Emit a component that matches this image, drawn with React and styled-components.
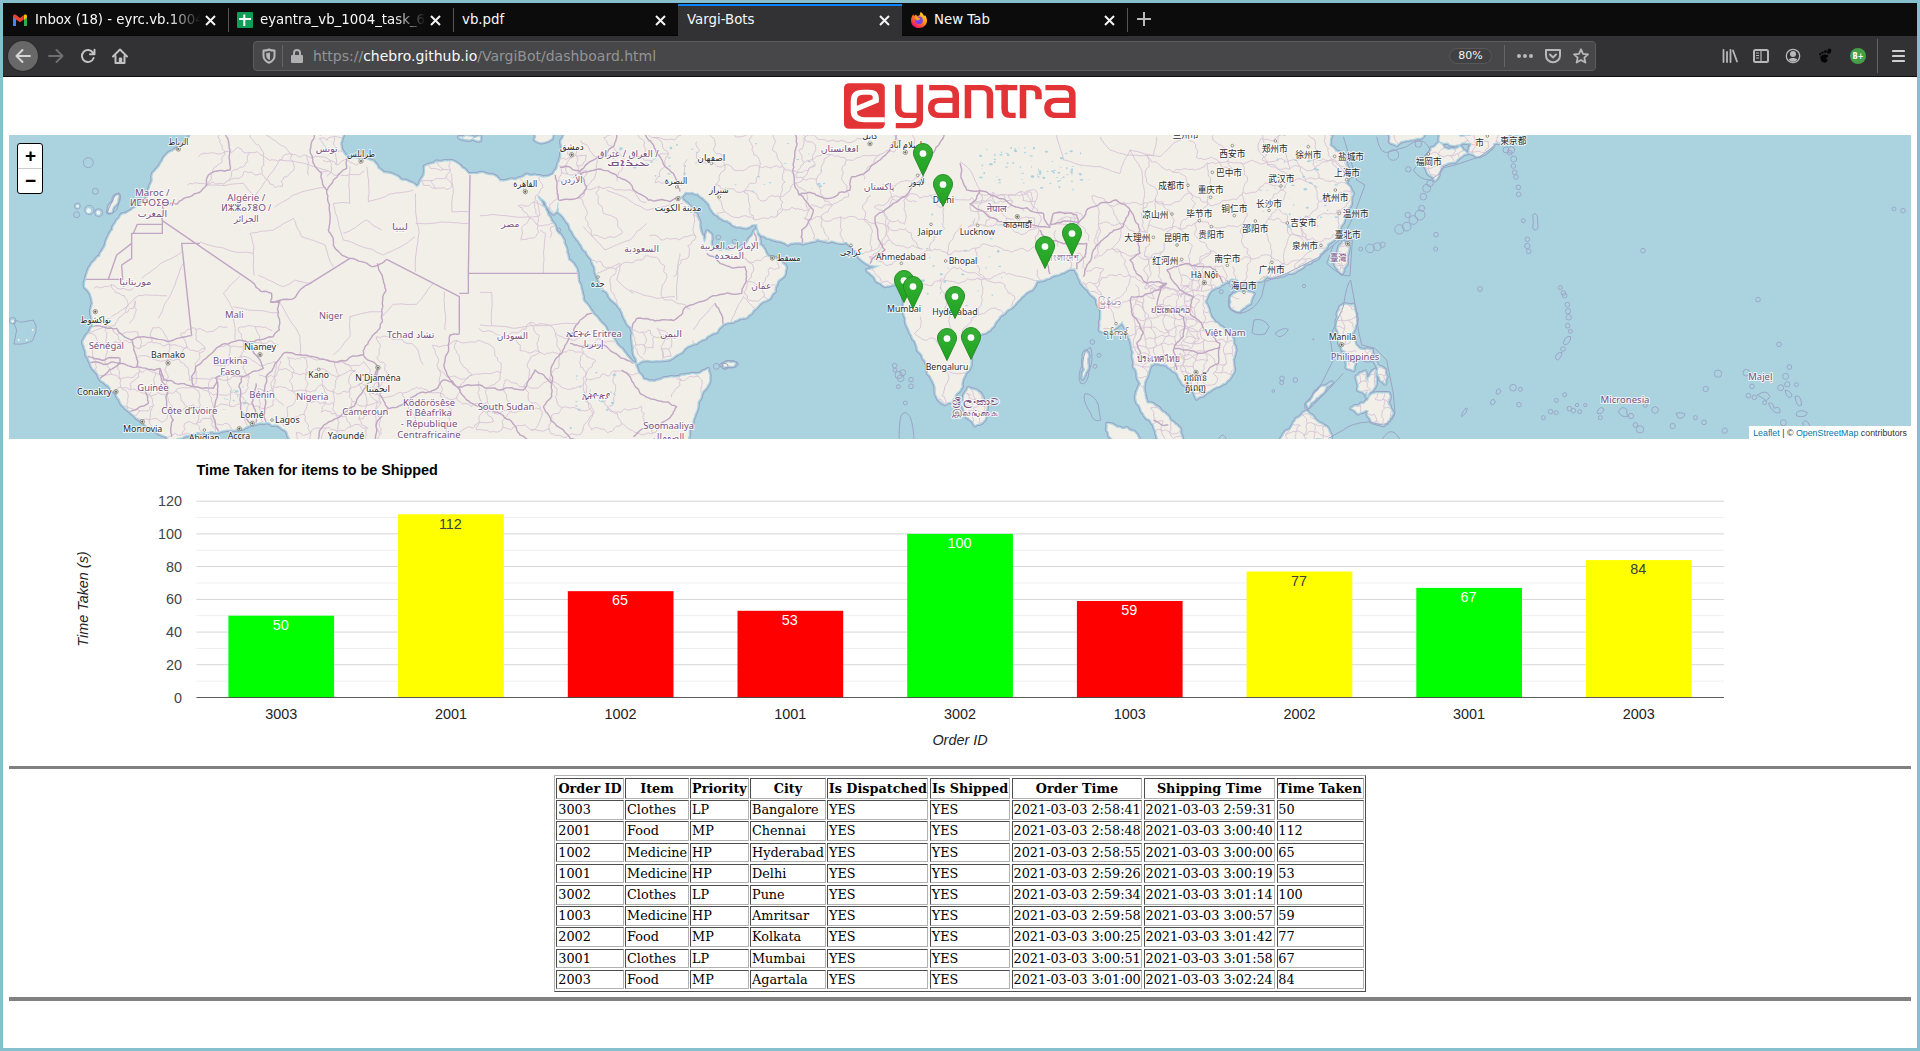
import React from "react";
import styled, { createGlobalStyle } from "styled-components";

const GlobalStyle = createGlobalStyle`
  * { box-sizing: border-box; }
  html, body { margin: 0; padding: 0; background: #86bfcd; overflow: hidden; }
`;

/* ---------- window and browser chrome ---------- */

const Window = styled.div`
  width: 1920px;
  height: 1051px;
  border: 3px solid #86bfcd;
  background: #fff;
  display: flex;
  flex-direction: column;
  overflow: hidden;
`;

const TabBar = styled.div`
  height: 33px;
  flex: none;
  display: flex;
  background: #0c0c0d;
  font: 13.33px "DejaVu Sans", sans-serif;
  color: #f9f9fa;
`;

const Tab = styled.div`
  width: ${(p) => (p.$active ? 224 : 225)}px;
  height: 33px;
  flex: none;
  display: flex;
  align-items: center;
  padding: ${(p) => (p.$active ? "0 12px 0 9px" : "0 12px 0 9px")};
  background: ${(p) => (p.$active ? "#323234" : "transparent")};
  border-top: 1px solid #0c0c0d;
  box-shadow: ${(p) => (p.$active ? "inset 0 2px 0 #0a84ff" : "inset 0 -1px 0 #050505")};
`;

const TabIcon = styled.span`
  width: 16px;
  height: 16px;
  margin-right: 7px;
  flex: none;
  display: flex;
`;

const TabTitle = styled.span`
  flex: 1;
  min-width: 0;
  white-space: nowrap;
  overflow: hidden;
  line-height: 20px;
  margin-top: -1px;
  mask-image: ${(p) => (p.$fade ? "linear-gradient(to left, transparent 0, #000 32px)" : "none")};
`;

const CloseIcon = styled.svg`
  width: 11px;
  height: 11px;
  flex: none;
  margin-left: 4px;
  stroke: #f4f4f5;
  stroke-width: 2;
  fill: none;
`;

const TabDivider = styled.i`
  width: 1px;
  height: 24px;
  margin: 5px -1px 0 0;
  background: #565657;
  flex: none;
`;

const PlusIcon = styled.svg`
  width: 14px;
  height: 14px;
  margin: 9px 0 0 10px;
  stroke: #b9b9ba;
  stroke-width: 2;
`;

const Toolbar = styled.div`
  height: 41px;
  flex: none;
  display: flex;
  align-items: center;
  background: #323234;
  border-bottom: 1px solid #0c0c0d;
  padding: 0 12px 0 4px;
`;

const BackButton = styled.span`
  width: 32px;
  height: 32px;
  border-radius: 50%;
  background: #686869;
  border: 1px solid #29292a;
  display: flex;
  align-items: center;
  justify-content: center;
`;

const Icon = styled.svg`
  width: ${(p) => p.$w || 16}px;
  height: 16px;
  flex: none;
  margin-left: ${(p) => p.$ml || 0}px;
  color: ${(p) => p.$color || "#b8b8b9"};
  fill: none;
  stroke: currentColor;
  stroke-width: 2;
  stroke-linecap: round;
  stroke-linejoin: round;
`;

const UrlBar = styled.div`
  width: 1344px;
  height: 30px;
  margin-left: 125px;
  border: 1px solid #5c5c5e;
  border-radius: 4px;
  background: #474749;
  display: flex;
  align-items: center;
  padding: 0 6px 0 8px;
`;

const BarDivider = styled.i`
  width: 1px;
  height: ${(p) => p.$h}px;
  background: #646468;
  margin-left: ${(p) => p.$ml}px;
`;

const Url = styled.span`
  font: 14px/20px "DejaVu Sans", sans-serif;
  color: #949496;
  margin-left: 10px;
  flex: 1;
  b { font-weight: 400; color: #f9f9fa; }
`;

const ZoomPill = styled.span`
  width: 43px;
  height: 16px;
  border-radius: 8px;
  border: 1px solid #58585a;
  background: #414143;
  color: #f4f4f5;
  font: 11px/14px "DejaVu Sans", sans-serif;
  text-align: center;
`;

const X = () => (
  <CloseIcon viewBox="0 0 11 11"><path d="M1 1l9 9M10 1l-9 9" /></CloseIcon>
);

const GmailIcon = () => (
  <svg width="16" height="16" viewBox="0 0 16 16">
    <path d="M1 14V4l3 2.4V14Z" fill="#4285f4" />
    <path d="M12 14V6.4L15 4v10Z" fill="#34a853" />
    <path d="M1 4.4C1 2.6 3 2 4.2 3L8 6l3.8-3v4.4L8 10.3 1 5.4Z" fill="#ea4335" />
    <path d="M12 3c1.200-1 3-.4 3 1.400V5.500l-3 2.300Z" fill="#fbbc04" />
  </svg>
);

const SheetsIcon = () => (
  <svg width="16" height="16" viewBox="0 0 16 16">
    <rect width="16" height="16" rx="1" fill="#0f9d58" />
    <path d="M2 7h12M7.300 2.500v11.500" stroke="#fff" strokeWidth="2" />
  </svg>
);

const FirefoxIcon = () => (
  <svg width="16" height="16" viewBox="0 0 16 16">
    <defs>
      <linearGradient id="fx" x1="1" y1="0" x2="0.200" y2="1">
        <stop offset="0" stopColor="#fff44f" />
        <stop offset="0.450" stopColor="#ff980e" />
        <stop offset="0.800" stopColor="#ff3750" />
        <stop offset="1" stopColor="#eb0878" />
      </linearGradient>
    </defs>
    <path d="M8 16C3.400 16 0 12.700 0 8.400 0 6 .8 4 2.200 2.200L3 4l2-1.500L6 4l2.500-.5L9.500 0C12 1.500 12.600 3 13 4l1-.8C15.400 5 16 6.800 16 8.500 16 12.800 12.500 16 8 16Z" fill="url(#fx)" />
    <circle cx="8" cy="8.400" r="3.800" fill="#7542e5" />
    <path d="M4 5.500c1.500-.8 3-.5 4 .5 1 .3 1.500.5 1.200 1.200-1 1-2.700.5-3 1.800C6 8 4 7.500 4 5.500Z" fill="#ffa41a" />
  </svg>
);

function Chrome() {
  return (
    <>
      <TabBar>
        <Tab><TabIcon><GmailIcon /></TabIcon><TabTitle $fade>Inbox (18) - eyrc.vb.1004</TabTitle><X /></Tab>
        <TabDivider />
        <Tab><TabIcon><SheetsIcon /></TabIcon><TabTitle $fade>eyantra_vb_1004_task_6</TabTitle><X /></Tab>
        <TabDivider />
        <Tab><TabTitle>vb.pdf</TabTitle><X /></Tab>
        <Tab $active><TabTitle>Vargi-Bots</TabTitle><X /></Tab>
        <Tab><TabIcon><FirefoxIcon /></TabIcon><TabTitle>New Tab</TabTitle><X /></Tab>
        <TabDivider />
        <PlusIcon viewBox="0 0 14 14"><path d="M7 0v14M0 7h14" /></PlusIcon>
      </TabBar>
      <Toolbar>
        <BackButton><Icon viewBox="0 0 16 16" $color="#d6d6d7"><path d="M15 8H1.500M7.500 2l-6 6 6 6" /></Icon></BackButton>
        <Icon $ml={9} $color="#6f6f71" viewBox="0 0 16 16"><path d="M1 8h13.500M8.500 2l6 6-6 6" /></Icon>
        <Icon $ml={16} viewBox="0 0 16 16" $color="#c2c2c3"><path d="M13 4.800A6 6 0 1 0 13.600 10M14.500 1.800v4.400H10" /></Icon>
        <Icon $ml={16} viewBox="0 0 16 16" $color="#c2c2c3"><path d="M1 8.500 8 1.500l7 7M3.500 8v7h9V8" /><path d="M7.800 14v-3.500h1.400V14" /></Icon>
        <UrlBar>
          <Icon $w={14} viewBox="0 0 14 16"><path d="M7 1.500C5 2.500 3 2.600 1.500 2.600V8c0 3.500 2.500 5.500 5.500 6.700 3-1.200 5.500-3.200 5.500-6.700V2.600C11 2.600 9 2.500 7 1.500Z" /><path d="M7.200 5v6.200C5.800 10.400 5 9.500 5 8V5.500" strokeWidth="1.500" fill="currentColor" /></Icon>
          <BarDivider $ml={6} $h={22} />
          <Icon $ml={8} $w={12} viewBox="0 0 12 16" $color="#b0b0b1"><path d="M3 8V5a3 3 0 0 1 6 0v3" /><rect x="1" y="8" width="10" height="6" fill="currentColor" /></Icon>
          <Url>https://<b>chebro.github.io</b>/VargiBot/dashboard.html</Url>
          <ZoomPill>80%</ZoomPill>
          <BarDivider $ml={12} $h={22} />
          <Icon $ml={12} viewBox="0 0 16 16"><g fill="currentColor" stroke="none"><circle cx="2" cy="8" r="2" /><circle cx="8" cy="8" r="2" /><circle cx="14" cy="8" r="2" /></g></Icon>
          <Icon $ml={12} viewBox="0 0 16 16"><path d="M1 2h14v5.500a7 6.800 0 0 1-14 0Z" /><path d="M5 6.500l3 3 3-3" /></Icon>
          <Icon $ml={12} viewBox="0 0 16 16"><path d="M8 1.300 10 5.800l5 .5-3.700 3.300 1.100 5L8 12l-4.400 2.600 1.100-5L1 6.300l5-.5Z" strokeWidth="1.800" /></Icon>
        </UrlBar>
        <Icon $ml={126} viewBox="0 0 16 16" strokeLinecap="butt"><path d="M1.500 2v12M5 4v10M8.500 2v12M11 2.500l4 11" strokeWidth="1.800" /></Icon>
        <Icon $ml={15} viewBox="0 0 16 16"><rect x="1" y="2" width="14" height="12" rx="1.500" /><path d="M8 2v12M3.500 5H5.500M3.500 7.500H5.500M3.500 10H5.500" strokeWidth="1.200" /></Icon>
        <Icon $ml={16} viewBox="0 0 16 16"><circle cx="8" cy="8" r="6.700" strokeWidth="1.300" /><circle cx="8" cy="6" r="3" fill="currentColor" stroke="none" /><path d="M3.800 11.500c1.500-2 7-2 8.400 0-2 3-6.500 3-8.400 0Z" fill="currentColor" stroke="none" /></Icon>
        <Icon $ml={16} viewBox="0 0 16 16" $color="#050505">
          <g fill="currentColor" stroke="none">
            <path d="M4.500 7.500c3-1.700 7.500-1.500 6.500 1.300-.6 1.500-2.400 1-2.400 2 0 .8 2.200-.4 1.900 1.500-.4 2.400-4 3.200-5.700 1.200C3.300 11.800 2.500 8.700 4.500 7.500Z" />
            <ellipse cx="12.300" cy="3.200" rx="1.900" ry="2.700" transform="rotate(20 12.300 3.200)" />
            <circle cx="8.500" cy="3.600" r="1.500" /><circle cx="5.500" cy="4.600" r="1.200" /><circle cx="3.200" cy="6.200" r="1.100" />
          </g>
        </Icon>
        <Icon $ml={17} viewBox="0 0 16 16" stroke="none">
          <circle cx="8" cy="8" r="8" fill="#43a047" stroke="none" />
          <text x="2.600" y="11.200" fontSize="8.500" fontWeight="700" fontFamily="DejaVu Sans, sans-serif" fill="#fff" stroke="none" textLength="11" lengthAdjust="spacingAndGlyphs">B+</text>
        </Icon>
        <BarDivider $ml={11} $h={34} />
        <Icon $ml={14} $w={13} viewBox="0 0 13 16" $color="#d0d0d1"><path d="M1 3h11M1 8h11M1 13h11" strokeWidth="2.200" /></Icon>
      </Toolbar>
    </>
  );
}

/* ---------- page ---------- */

const Page = styled.main`
  flex: 1;
  padding: 0 6px;
  display: flex;
  flex-direction: column;
`;

const Header = styled.header`
  height: 58px;
  flex: none;
  display: flex;
  justify-content: center;
  padding-top: 6px;
`;

const Rule = styled.hr`
  border: 0;
  margin: 0;
  flex: none;
  height: ${(p) => p.$h}px;
  background: #808080;
`;

const Logo = () => (
  <svg width="232" height="46" viewBox="500 248 569 138" preserveAspectRatio="none" role="img" aria-label="eyantra">
    <rect x="500" y="249" width="100" height="136" rx="13" fill="#e23337" />
    <path d="M600 358H550Q524 358 524 332V302Q524 276 546 276H562Q578 276 578 292V301L528 327" fill="none" stroke="#fff" strokeWidth="15" />
    <g fill="none" stroke="#e23337" strokeWidth="16">
      <path d="M633 253V322Q633 345 655 345H686M686 253V356Q686 376 664 376H627" />
      <path d="M709 262H754Q774 262 774 284V345H736Q714 345 714 322Q714 300 736 300H774" />
      <path d="M804 354V262H838Q858 262 858 284V354" />
      <path d="M871 262H925M894 253V326Q894 345 908 345H921" />
      <path d="M939 354V262H958Q977 262 977 280V297" />
      <path d="M994 262H1040Q1060 262 1060 284V345H1021Q999 345 999 322Q999 300 1021 300H1060" />
    </g>
  </svg>
);

/* ---------- map ---------- */

const MapBox = styled.section`
  position: relative;
  height: 304px;
  flex: none;
  overflow: hidden;
  background: #aad3df;
`;

const MapSvg = styled.svg`
  display: block;
  width: 1902px;
  height: 304px;
  font-family: "Noto Sans", "DejaVu Sans", "Noto Sans CJK SC", sans-serif;
`;

const ZoomControl = styled.div`
  position: absolute;
  left: 8px;
  top: 8px;
  width: 26px;
  height: 51px;
  border: 1px solid #000;
  border-radius: 3px;
  background: #fff;
  display: flex;
  flex-direction: column;
`;

const ZoomButton = styled.button`
  flex: 1;
  padding: 0 0 0 1px;
  border: 0;
  border-bottom: ${(p) => (p.$first ? "1px solid #ccc" : "0")};
  background: none;
  font: bold 19px/22px "Liberation Sans", Arial, sans-serif;
  color: #000;
`;

const Attribution = styled.div`
  position: absolute;
  right: 0;
  bottom: 0;
  height: 13px;
  padding: 0 4px;
  background: #fff;
  color: #333;
  font: 8.85px/14px "Liberation Sans", Arial, sans-serif;
  a { color: #0078a8; text-decoration: none; }
`;

const Pin = styled.svg`
  position: absolute;
  left: ${(p) => p.$x - 10}px;
  top: ${(p) => p.$y - 33}px;
  width: 20px;
  height: 33px;
`;

/* The drawing uses three units to a pixel, in four sheets of 1440 units. */
let seed = 7;
const rnd = () => {
  seed = (seed * 16807) % 2147483647;
  return seed / 2147483647;
};

const jag = (pts, amp = 0.1, min = 14) => {
  let out = pts;
  for (let k = 0; k < 4; k++) {
    const next = [out[0]];
    for (let i = 1; i < out.length; i++) {
      const [ax, ay] = out[i - 1];
      const [bx, by] = out[i];
      const len = Math.hypot(bx - ax, by - ay);
      if (len > min) {
        const d = (rnd() - 0.5) * 2 * amp;
        next.push([(ax + bx) / 2 - (by - ay) * d, (ay + by) / 2 + (bx - ax) * d]);
      }
      next.push(out[i]);
    }
    out = next;
  }
  return out;
};

const toPts = (s, dx = 0) => s.trim().split(/\s+/).map((q) => {
  const [x, y] = q.split(",").map(Number);
  return [x + dx, y];
});
const toD = (pts) => "M" + pts.map(([x, y]) => x.toFixed(1) + " " + y.toFixed(1)).join("L");

const MAINLAND = [
  ...toPts("575,5 530,57 490,90 460,130 452,165 445,200 405,235 365,255 340,300 318,345 300,380 272,410 258,448 255,470 272,490 280,520 274,545 282,575 270,605 250,635 258,660 268,690 285,720 300,745 325,765 350,790 362,815 385,840 425,872 465,898 500,918 515,940 530,925 560,915 610,907 655,906 720,897 760,883 800,876 835,885 862,905 880,940 900,1500"),
  ...toPts("600,1500 620,940 632,890 645,850 662,800 682,765 684,718 620,735 560,745 510,755 490,750 475,730 465,702 450,690 430,665 405,635 375,592 355,570 330,540 307,508 303,480 292,430 264,390 253,345 227,300 208,262 187,228 172,195 197,215 220,250 229,240 235,215 236,245 262,275 285,318 310,355 340,400 352,440 385,490 410,520 430,555 455,590 458,630 462,670 472,700 530,690 600,668 640,640 710,605 720,590 800,560 830,530 868,505 890,460 917,415 905,398 860,378 838,345 828,300 810,325 790,348 740,360 700,358 693,315 682,305 672,340 660,300 655,268 615,218 600,200 615,185 655,190 690,225 720,262 760,285 800,292 832,282 845,315 880,328 970,340 1060,332 1100,335 1130,365 1150,392 1170,405 1205,405 1162,420 1190,452 1215,468 1245,462 1262,436 1274,480 1272,520 1284,590 1314,660 1344,730 1372,800 1395,822 1412,815 1428,790", 1440),
  ...toPts("5,770 25,720 32,690 22,640 38,610 88,600 108,572 158,528 215,478 230,450 275,437 300,430 345,415 362,450 387,480 412,510 424,555 420,600 442,606 470,590 488,572 505,615 515,640 522,690 533,730 543,760 528,800 543,835 572,870 587,900 600,940 668,940 660,900 628,870 600,840 560,820 550,780 560,740 572,703 620,703 648,725 668,760 700,780 710,805 745,783 795,758 822,720 826,660 815,622 780,590 752,562 735,520 745,490 790,460 815,445 835,450 840,470 850,450 880,458 920,438 985,428 1050,398 1090,360 1120,330 1140,290 1162,240 1178,190 1155,160 1178,135 1150,75 1108,45 1120,5 1120,-900", 2880),
  ...toPts("255,-900 255,5 246,60 236,100 222,133 190,143 140,135 100,150 60,155 0,130", 1440),
  ...toPts("1405,133 1380,108 1350,93 1310,95 1275,110 1268,145 1250,172 1200,150 1150,130 1120,95 1085,90 1040,80 1022,50 1032,5 1032,-200"),
];

const ISLANDS = [
  ["168,10 165,28 190,36 215,25 220,10", 1440],
  ["1378,22 1400,28 1440,30 1440,20 1400,18", 0],
  ["725,705 740,698 765,700 760,708 735,712", 1440],
  ["25,775 60,790 80,830 75,865 45,885 20,860 12,810", 2880],
  ["812,500 850,485 880,492 870,520 838,543 812,530", 2880],
  ["1150,335 1165,348 1160,400 1145,430 1125,400 1135,365", 2880],
  ["1142,530 1180,525 1188,580 1172,615 1195,655 1235,660 1240,690 1200,680 1165,672 1138,640 1130,575", 2880],
  ["1115,758 1085,790 1045,830 1042,820 1085,770", 2880],
  ["1160,695 1185,700 1180,720 1160,712", 2880],
  ["1190,740 1215,725 1225,760 1215,790 1195,780", 2880],
  ["1225,745 1245,720 1240,775 1220,800", 2880],
  ["1245,695 1275,720 1275,760 1255,735", 2880],
  ["1175,835 1215,820 1250,790 1285,790 1298,850 1270,885 1235,875 1225,840 1195,850", 2880],
  ["442,882 500,895 530,915 550,945 470,945", 2880],
  ["960,940 990,900 1040,845 1070,875 1105,900 1110,940", 2880],
  ["1285,5 1400,5 1385,22 1345,30 1310,45 1290,35", 2880],
  ["1395,85 1415,55 1440,38 1440,120 1425,150 1405,130", 2880],
  ["0,50 25,60 60,50 80,70 45,95 5,108", 4320],
  ["0,5 120,5 210,5 205,30 160,40 110,78 88,68 95,40 40,45 0,35", 4320],
  ["370,690 378,665 385,680 380,720 368,745", 2880],
  ["325,245 345,200 355,195 352,215 335,245", 0],
];

const MAJOR = [
  ["675,5 690,60 690,120 625,135 620,165 570,200 487,225 487,272", 0],
  ["812,517 840,515 838,600 820,620 730,632 700,635 640,665 610,690 575,740 580,768", 0],
  ["645,745 730,740 790,715 780,690 735,632", 0],
  ["755,455 785,485 815,490 812,517 885,503 930,460", 0],
  ["1050,385 1000,345 985,300 990,250 980,180 965,130 930,60 945,5", 0],
  ["982,180 1000,150 1040,115 1040,85", 0],
  ["1050,385 1085,395 1115,410 1160,388", 0],
  ["1132,400 1150,450 1158,480 1147,575 1095,650 1090,675 1130,705", 0],
  ["1378,612 1350,615 1335,690 1345,740 1370,770 1440,765 1500,780 1570,780 1605,720 1655,760 1655,800 1630,830", 0],
  ["825,700 850,670 900,675 980,690 1090,675", 0],
  ["575,617 430,620 395,630 350,595 280,590", 0],
  ["395,630 410,710 480,715 490,750 580,770 640,775 650,745", 0],
  ["258,680 360,685 360,698 262,700", 0],
  ["300,745 360,700 410,712", 0],
  ["435,780 445,820 390,845", 0], ["505,770 500,830 520,870 515,920", 0],
  ["650,745 640,850 655,905", 0], ["725,740 735,860 750,880", 0], ["768,760 768,878", 0], ["825,700 798,740 798,875", 0],
  ["480,715 500,770", 0],
  ["1130,705 1090,780 1020,860 960,900 950,940", 0],
  ["1130,705 1140,790 1165,835 1130,880 1125,940", 0],
  ["1165,835 1240,800 1330,750 1370,770", 0],
  ["1370,770 1400,810 1440,830 1500,850 1560,915 1600,940", 0],
  ["215,760 225,690 260,640 300,570 345,545", 1440],
  ["190,830 250,900 300,940", 1440], ["270,640 380,650 440,690 460,700", 1440],
  ["425,720 450,740 480,790 590,830 560,870 460,920", 1440],
  ["235,210 226,135", 1440], ["235,210 290,205 320,170 300,130 350,118 450,160 505,210 570,215 600,200", 1440],
  ["240,112 300,125 400,50 412,5", 1440], ["495,5 540,80 580,130 600,185", 1440],
  ["455,600 470,565 580,572 620,530 785,490 800,440 795,410 720,400 680,370", 1440],
  ["705,520 735,590", 1440], ["820,300 830,340", 1440],
  ["950,5 940,100 955,190 1000,240 965,300 968,340", 1440],
  ["955,195 1050,205 1110,180 1115,140 1200,90 1255,5", 1440],
  ["1170,400 1215,360 1190,290 1185,260 1240,220 1290,180 1330,140 1350,80 1400,5", 1440],
  ["1440,100 1460,180 1500,182 1590,222 1690,250 1710,292 1590,280 1470,222 1500,182", 1440],
  ["270,285 280,250 350,255 355,280 270,285", 2880],
  ["355,280 380,240 420,220 470,210 510,240 490,290 440,320 400,360 385,400 370,440", 2880],
  ["240,300 260,350 270,432", 2880], ["270,330 380,340 375,380 350,400 350,418", 2880],
  ["510,240 540,300 540,370 510,390 560,460 620,460 570,490 515,500 520,560 550,610 530,640 545,700", 2880],
  ["620,420 680,400 750,410 780,440 790,460", 2880],
  ["620,420 660,480 700,500 690,550 760,620 780,640 775,700 700,740", 2880],
  ["620,460 600,470 590,530 670,560 670,620 640,660 650,720", 2880],
  ["640,655 780,650", 2880], ["580,870 625,885", 2880],
];

const STRAIGHT = [
  "M487 272L755 455", "M487 272V310H395V385L365 405L368 448H258", "M487 283H412L400 310",
  "M395 340L350 375L325 448", "M600 340H545L575 617", "M930 460L1050 385", "M1160 388L1378 500V612",
  "M1378 490H1405V430L1410 135", "M1405 430H1740",
];

const MINOR = [
  ["620,165 730,160 765,200 840,90", 0], ["840,90 985,122", 0], ["825,232 880,195 975,172", 0],
  ["600,335 760,370", 0], ["762,437 762,350 750,310 820,300 880,265 905,320 975,345 1000,410", 0],
  ["775,435 850,470 885,450 935,460", 0], ["425,445 545,365", 0], ["550,400 475,565", 0],
  ["300,580 415,497 500,497", 0], ["720,437 670,490 700,540 705,630", 0], ["700,530 838,548", 0],
  ["840,520 900,620 900,675", 0], ["1000,675 1050,620 1050,560 1147,545", 0],
  ["1147,560 1180,523 1250,523 1300,460", 0], ["1333,485 1335,600", 0], ["1050,110 1050,220 1000,220", 0],
  ["1100,110 1105,215 1240,180", 0], ["1247,190 1247,425", 0], ["1247,280 1405,280", 0], ["1355,130 1355,245 1405,245", 0],
  ["1000,220 1030,330 1150,375 1245,320", 0], ["1030,310 1100,270 1145,300", 0],
  ["1440,257 1620,257 1610,210", 0], ["1630,430 1636,310 1620,300", 0], ["1440,487 1475,487 1475,585", 0],
  ["1440,585 1640,587 1735,580", 0], ["310,290 375,360 450,330 500,280", 1440], ["600,370 590,510", 1440],
  ["450,480 530,505 585,500", 1440], ["350,430 420,400 410,450 460,490", 1440],
  ["610,220 500,240 380,180", 1440], ["705,520 660,570 640,600", 1440], ["740,600 790,500 830,540", 1440],
  ["130,20 160,60 210,75 290,75 300,20", 3170], ["290,15 310,90 420,110 480,130 510,60 600,80 640,40 680,20", 2880],
  ["510,60 545,120 550,250", 2880], ["60,180 30,120 0,95", 2880],
];

const MESHES = [
  [265, 600, 830, 930, 46], [830, 690, 1130, 930, 42], [1130, 640, 1480, 930, 85], [570, 15, 960, 180, 68], [960, 15, 1060, 130, 40],
  [1260, 90, 1350, 170, 28], [280, 470, 400, 600, 60], [1440, 600, 1760, 930, 75], [1560, 140, 1650, 300, 45],
  [1680, 60, 1740, 150, 22], [1760, 15, 2080, 170, 72], [1720, 190, 2050, 480, 110], [1900, 600, 2010, 690, 26],
  [1740, 640, 2100, 930, 85], [2070, 15, 2400, 300, 82], [2240, 380, 2320, 520, 42], [2400, 15, 2760, 330, 66],
  [2630, 210, 3120, 460, 78], [2720, 440, 3060, 800, 94], [2910, 190, 3100, 290, 24], [3150, 250, 3240, 290, 18],
  [3170, 300, 3300, 600, 40], [3270, 220, 3500, 600, 78], [3400, 470, 3570, 760, 30], [3540, 410, 3710, 800, 32],
  [3420, 100, 4060, 460, 96], [3560, 15, 4000, 120, 96], [3800, 15, 4080, 430, 110], [2900, 790, 2960, 880, 18], [3450, 840, 3560, 930, 30],
  [4000, 520, 4190, 900, 24], [4010, 350, 4045, 430, 20], [4180, 5, 4560, 130, 34], [3860, 860, 4000, 930, 26],
];

const buildMesh = ([x0, y0, x1, y1, c]) => {
  const nx = Math.max(1, Math.round((x1 - x0) / c));
  const ny = Math.max(1, Math.round((y1 - y0) / c));
  const grid = [];
  for (let j = 0; j <= ny; j++) {
    grid.push([]);
    for (let i = 0; i <= nx; i++) {
      grid[j].push([x0 + i * c + (j % 2 ? c * 0.35 : 0) + (rnd() - 0.5) * c * 0.6, y0 + j * c + (rnd() - 0.5) * c * 0.6]);
    }
  }
  let d = "";
  for (let j = 0; j <= ny; j++) {
    for (let i = 0; i <= nx; i++) {
      if (i < nx && rnd() > 0.25) d += toD(jag([grid[j][i], grid[j][i + 1]], 0.22, 12));
      if (j < ny && rnd() > 0.25) d += toD(jag([grid[j][i], grid[j + 1][i]], 0.22, 12));
    }
  }
  return d;
};

const LAND = toD(jag(MAINLAND, 0.12, 10)) + "Z" + ISLANDS.map(([s, dx]) => toD(jag([...toPts(s, dx), toPts(s, dx)[0]], 0.14, 9)) + "Z").join("");
const MAJOR_D = MAJOR.map(([s, dx]) => toD(jag(toPts(s, dx), 0.12, 10))).join("") + STRAIGHT.join("");
const MINOR_D = MINOR.map(([s, dx]) => toD(jag(toPts(s, dx), 0.05, 14))).join("") + MESHES.map(buildMesh).join("");

const LAKES = [];
const scatter = (n, x0, y0, w, h) => {
  for (let i = 0; i < n; i++) LAKES.push([x0 + rnd() * w, y0 + rnd() * h, 1 + rnd() * 5, 1 + rnd() * 3]);
};
scatter(60, 2940, 50, 330, 110);
scatter(22, 3100, 120, 150, 60);
scatter(40, 3780, 60, 230, 230);
scatter(24, 1860, 30, 260, 110);
scatter(20, 2200, 30, 300, 160);
scatter(25, 2760, 200, 250, 350);
scatter(20, 1700, 700, 150, 200);
scatter(12, 670, 760, 80, 110);

const RINGS = [
  ["265,98,15 286,184,9 232,228,9 230,254,9 268,240,14 296,248,12 38,572,10", 0],
  ["236,300,6 715,322,7 764,335,7 709,709,9 735,709,9 1244,707,7 1245,720,6 1256,735,11 1268,728,9 1262,745,10 1255,770,6 1293,749,7 1293,769,7 1276,819,6", 1440],
  ["397,636,7 417,676,6 405,709,6 784,485,6 1032,468,5 966,745,7 965,758,6 1006,750,7 940,783,4 1060,628,2 1202,357,6 1230,355,13 1252,350,12 1268,344,8 1428,314,7 1427,357,6 1343,255,8 1345,118,8 1300,75,16 1375,42,10", 2880],
  ["1380,255,15 1360,270,13 1340,290,13 1318,298,14 1400,175,12 1410,160,10 1390,200,10 1385,235,9", 2880],
  ["198,60,9 214,60,10 209,68,7 221,87,9 220,108,7 224,127,7 228,141,7 235,172,7 236,193,7 250,272,6 262,328,7 262,348,8 266,364,7 609,362,7 120,477,7 361,473,6 370,489,7 374,497,7 382,524,7 384,544,8 386,562,8 383,587,7 391,604,6 369,657,7 954,509,7 1362,237,6 1389,242,7", 4320],
  ["219,773,10 241,778,6 237,824,7 374,794,6 349,811,6 332,845,7 349,848,6 310,863,6 411,825,5 436,825,5 388,836,7 400,842,7 419,845,6 481,863,6 573,858,8 586,885,7 600,898,11 645,840,10 616,826,6 698,888,8 766,863,6 792,877,7 854,902,8 797,777,8 834,731,11 919,728,10 1017,643,7 1048,711,7 1037,739,9 1042,763,8 1022,773,9 1069,764,6 936,769,7 925,797,7 943,802,7 974,818,6 1030,878,9", 4320],
];

const RING_PATHS = [
  "M40 575C50 565 60 582 72 575L100 570Q112 588 108 605L98 632Q75 645 42 642L50 600Z",
  "M320 250L345 195Q358 185 362 205L350 240Q330 258 320 250Z",
  "M2165 705Q2170 690 2200 692Q2225 700 2210 710Q2180 720 2165 705Z",
  "M2702 860Q2715 835 2730 860Q2742 890 2742 940H2698Q2696 890 2702 860Z",
  "M3242 760Q3230 740 3248 700Q3252 655 3272 652Q3282 690 3268 720Q3262 770 3242 760Z",
  "M3255 790Q3285 795 3295 825Q3300 860 3302 870Q3280 880 3272 850Q3245 810 3255 790Z",
  "M3762 570Q3790 562 3808 590L3795 612Q3770 618 3756 608Z",
  "M3825 610Q3850 590 3865 598Q3855 620 3835 620Z",
  "M4052 450L4068 540L4075 600L4085 645L4125 655L4160 690L4180 790L4185 850Q4170 900 4110 875Q4050 880 4030 900L3985 925",
  "M4052 450Q4040 460 4030 530L3990 620L4000 690L3960 770L3915 820Q3910 840 3925 840L3975 790L4030 730",
  "M4130 20Q4140 80 4170 65L4220 50Q4270 10 4290 60L4240 120Q4260 150 4290 150L4320 130L4325 115L4365 105L4440 80L4480 50",
  "M4030 330L4057 330L4050 438Q4020 440 3980 400L4000 345",
  "M4030 20L4070 150L4095 165L4060 260L4030 320L3960 380L3860 430L3795 455L3785 500Q3760 545 3720 550Q3680 540 3685 510L3700 480L3680 450",
  "M4598 255Q4604 245 4612 258L4614 295Q4606 305 4598 295L4600 275Z",
  "M4690 640Q4695 615 4712 620Q4712 640 4695 645Z", "M4666 685Q4668 665 4686 668Q4684 685 4672 690Z",
  "M4855 845Q4865 825 4880 838L4882 860Q4862 862 4855 845Z", "M5028 850Q5040 845 5055 852Q5050 868 5035 864Z",
  "M5272 795Q5300 775 5310 800L5300 812Z", "M5305 820Q5320 815 5322 835Q5342 825 5340 848Q5320 855 5305 820Z",
  "M5355 780Q5378 785 5375 800Q5360 810 5355 780Z", "M5385 800Q5402 790 5405 825Q5390 835 5385 800Z",
  "M5388 850Q5400 835 5422 848Q5418 865 5390 858Z", "M5408 878Q5420 862 5430 890L5410 890Z",
  "M4385 855Q4395 830 4402 835Q4402 850 4385 860Z", "M4490 780Q4500 770 4502 785Q4495 798 4488 790Z",
  "M4472 815Q4480 800 4486 815Q4482 828 4472 822Z", "M4792 845Q4800 825 4812 838Q4806 855 4792 850Z",
  "M3650 940Q3670 890 3682 940Z", "M4140 940Q4175 870 4205 940Z",
];

const COUNTRY = [
  ["تونس", 980, 66, 66], ["Maroc /", 457, 197, 104], ["ⵍⵎⵖⵔⵉⴱ /", 457, 229, 134], ["المغرب", 457, 261, 88],
  ["Algérie /", 739, 212, 114], ["ⵍⵣⵣⴰⵢⴻⵔ /", 739, 243, 150], ["الجزائر", 739, 275, 74], ["ليبيا", 1200, 300, 48],
  ["موريتانيا", 406, 466, 96], ["Mali", 703, 564, 56], ["Niger", 993, 566, 72], ["Tchad تشاد", 1232, 624, 142],
  ["Sénégal", 319, 658, 106], ["Burkina", 691, 702, 104], ["Faso", 691, 734, 60], ["Guinée", 459, 784, 94],
  ["Bénin", 786, 804, 76], ["Nigeria", 937, 810, 98], ["Ködörösêse", 1287, 827, 156], ["tî Bêafrîka", 1287, 859, 138],
  ["- République", 1287, 891, 170], ["Centrafricaine", 1287, 923, 190], ["Côte d’Ivoire", 568, 852, 168], ["Cameroun", 1096, 854, 138],
  ["العراق / عێراق /", 1884, 80, 184], ["ܥܝܪܐܩ", 1885, 108, 130], ["الأردن", 1715, 160, 66], ["مصر", 1531, 290, 54],
  ["السعودية", 1925, 366, 104], ["الإمارات العربية", 2188, 356, 176], ["المتحدة", 2188, 388, 88], ["عمان", 2284, 476, 60],
  ["السودان", 1537, 626, 94], ["ኤርትራ Eritrea", 1781, 620, 168], ["إرتريا", 1781, 652, 60], ["اليمن", 2013, 622, 66],
  ["ኢትዮጵያ", 1788, 806, 84], ["South Sudan", 1518, 840, 170], ["Soomaaliya", 2006, 897, 152], ["الصومال", 2006, 929, 94],
  ["افغانستان", 2519, 66, 114], ["پاکستان", 2637, 180, 92], ["नेपाल", 2990, 245, 60], ["বাংলাদেশ", 3186, 392, 96],
  ["臺灣", 4015, 392, 50], ["မြန်မာ", 3329, 526, 70], ["ປະເທດລາວ", 3512, 548, 116], ["Việt Nam", 3676, 617, 122],
  ["ประเทศไทย", 3474, 695, 128], ["Philippines", 4065, 689, 146], ["ශ්‍රී ලංකාව", 2925, 826, 140], ["இலங்கை", 2925, 858, 140],
  ["Micronesia", 4875, 820, 147], ["Majeḷ", 5281, 749, 72],
];

/* name, x, baseline, width, then the dot: x, y, 1 for a capital */
const TOWNS = [
  ["الرباط", 535, 44, 60, 535, 57, 1], ["طرابلس", 1083, 80, 84, 1083, 93, 1], ["نواكشوط", 287, 580, 92, 286, 545, 1],
  ["Bamako", 504, 684, 102, 504, 699, 1], ["Niamey", 780, 660, 96, 780, 674, 1], ["Kano", 956, 745, 62, 956, 718],
  ["N'Djaména", 1134, 753, 136, 1134, 713, 1], ["انجمينا", 1134, 785, 72], ["Conakry", 283, 796, 104, 348, 785, 1],
  ["Lomé", 756, 864, 70, 757, 880, 1], ["Lagos", 862, 880, 74, 816, 870], ["Monrovia", 428, 906, 118, 427, 875, 1],
  ["Abidjan", 613, 933, 92, 613, 900], ["Accra", 717, 926, 68, 718, 896, 1], ["Yaoundé", 1038, 926, 110],
  ["دمشق", 1715, 60, 72, 1715, 74, 1], ["اصفهان", 2134, 92, 84, 2134, 100], ["القاهرة", 1576, 170, 72, 1576, 185, 1],
  ["البصرة", 2028, 162, 68, 2030, 171], ["شیراز", 2157, 190, 58, 2158, 201], ["مدينة الكويت", 2034, 242, 140, 2034, 206, 1],
  ["جدة", 1793, 470, 42, 1794, 441], ["مسقط", 2366, 392, 72, 2317, 384, 1], ["کابل", 2610, 28, 46, 2610, 41, 1],
  ["اسلام آباد", 2718, 54, 96, 2716, 67, 1], ["لاہور", 2751, 166, 46, 2753, 136], ["Delhi", 2830, 220, 64],
  ["Jaipur", 2791, 316, 72, 2793, 283], ["کراچی", 2552, 376, 64, 2553, 346], ["Ahmedabad", 2703, 391, 150, 2704, 400],
  ["Bhopal", 2889, 403, 86, 2837, 393], ["Mumbai", 2712, 546, 102], ["Hyderabad", 2865, 556, 136], ["Bengaluru", 2841, 719, 128],
  ["काठमाडौं", 3052, 295, 86, 3052, 260, 1], ["Lucknow", 2932, 314, 106, 2933, 286],
  ["兰州市", 3557, 24, 78], ["西安市", 3697, 81, 78, 3697, 47], ["郑州市", 3824, 67, 78, 3826, 33], ["徐州市", 3925, 85, 78, 3925, 50],
  ["盐城市", 4053, 91, 78, 4004, 79], ["巴中市", 3687, 138, 78, 3637, 127], ["成都市", 3514, 177, 78, 3564, 166],
  ["重庆市", 3632, 190, 78, 3632, 202], ["武汉市", 3844, 157, 78, 3843, 168], ["上海市", 4041, 137, 78, 4040, 149],
  ["杭州市", 4006, 213, 78, 4006, 180], ["长沙市", 3807, 232, 78, 3807, 241], ["铜仁市", 3703, 247, 78, 3703, 257],
  ["毕节市", 3598, 261, 78, 3598, 272], ["凉山州", 3466, 264, 78, 3516, 252], ["温州市", 4067, 260, 78, 4018, 250],
  ["吉安市", 3910, 288, 78, 3862, 279], ["邵阳市", 3766, 306, 78, 3766, 273], ["贵阳市", 3634, 325, 78, 3634, 290],
  ["大理州", 3412, 333, 78, 3460, 322], ["昆明市", 3530, 333, 78, 3531, 345], ["臺北市", 4043, 324, 78, 4043, 341, 1],
  ["泉州市", 3915, 356, 78, 3963, 346], ["红河州", 3496, 401, 78, 3545, 388], ["南宁市", 3682, 396, 78, 3682, 406],
  ["广州市", 3815, 430, 78, 3816, 397], ["海口市", 3731, 477, 78, 3732, 487], ["Hà Nội", 3613, 444, 82, 3613, 458, 1],
  ["ရန်ကုန်", 3348, 614, 76, 3348, 581], ["រាជធានី", 3587, 752, 70, 3588, 727, 1], ["ភ្នំពេញ", 3587, 784, 66],
  ["Manila", 4027, 630, 82, 4025, 644, 1], ["福岡市", 4286, 106, 78, 4285, 72], ["市", 4439, 47, 26, 4462, 18], ["東京都", 4540, 41, 78],
];

const PINS = [[1329, 137, 1440], [1389, 230, 1440], [1272, 518, 1440], [1299, 536, 1440], [1425, 566, 1440], [1401, 692, 1440], [33, 690, 2880], [255, 416, 2880], [336, 378, 2880]];

const Halo = styled.text`
  font-size: 27.5px;
  text-anchor: middle;
  fill: ${(p) => (p.$country ? "#7a5082" : "#2b2b2b")};
  stroke: #fff;
  stroke-opacity: 0.75;
  stroke-width: 6;
  stroke-linejoin: round;
  paint-order: stroke;
`;

function WorldMap() {
  return (
    <MapBox>
      <MapSvg viewBox="27 15 5706 912" preserveAspectRatio="none">
        <defs><clipPath id="land"><path d={LAND} /></clipPath></defs>
        <g strokeLinejoin="round" fill="none">
          <path d={LAND} stroke="#9aa3c4" strokeWidth="14" />
          <path d={LAND} stroke="#aad3df" strokeWidth="8" />
          <path d={LAND} fill="#f2efe9" />
          {RING_PATHS.map((d) => <path key={d} d={d} stroke="#9ba4c4" strokeWidth="3" />)}
          {RINGS.map(([s, dx]) => s.split(" ").map((q) => {
            const [x, y, r] = q.split(",").map(Number);
            return <circle key={q} cx={x + dx} cy={y} r={r} stroke="#9ba4c4" strokeWidth="2.8" />;
          }))}
          <g clipPath="url(#land)">
            <path d={MINOR_D} stroke="#d6c3d6" strokeWidth="2.7" />
            <path d={MAJOR_D} stroke="#c0a6c3" strokeWidth="4.200" />
            {LAKES.map(([x, y, a, b], i) => <ellipse key={i} cx={x} cy={y} rx={a} ry={b} fill="#aad3df" />)}
          </g>
        </g>
        <g fill="#fff" fillOpacity="0.8">
          <circle cx="233" cy="229" r="4" /><circle cx="266" cy="242" r="7" /><circle cx="295" cy="248" r="6" />
          <circle cx="56" cy="630" r="3" /><circle cx="98" cy="600" r="3" /><circle cx="80" cy="630" r="3" /><circle cx="38" cy="574" r="4" />
        </g>
        {TOWNS.filter((t) => t[4]).map(([n, , , , x, y, cap]) => (
          <g key={n} fill="none" stroke="#6b6b62" strokeWidth="2">
            <circle cx={x} cy={y} r={cap ? 6.5 : 4} fill="#fbfaf2" />
            {cap && <circle cx={x} cy={y} r="2.500" fill="#55554e" />}
          </g>
        ))}
        {COUNTRY.map(([n, x, y, w]) => (
          <Halo key={n} $country x={x} y={y} textLength={w} lengthAdjust="spacingAndGlyphs">{n}</Halo>
        ))}
        {TOWNS.map(([n, x, y, w]) => (
          <Halo key={n} x={x} y={y} textLength={w} lengthAdjust="spacingAndGlyphs">{n}</Halo>
        ))}
      </MapSvg>
      {PINS.map(([x, y, dx]) => (
        <Pin key={x} viewBox="0 0 25 41" $x={(x + dx - 27) / 3} $y={(y - 15) / 3}>
          <defs><linearGradient id="pin" x1="0" y1="0" x2="0" y2="1"><stop offset="0" stopColor="#36b036" /><stop offset="1" stopColor="#1fa31f" /></linearGradient></defs>
          <path d="M12.500.6C5.900.6.600 5.900.600 12.500c0 2.600.8 4.700 2 7.200L12.500 40.500l9.900-20.800c1.200-2.500 2-4.600 2-7.200C24.400 5.900 19.100.6 12.500.6Z" fill="url(#pin)" stroke="#238a23" strokeWidth="1.200" />
          <circle cx="12.500" cy="13" r="4.200" fill="#fff" />
        </Pin>
      ))}
      <ZoomControl>
        <ZoomButton $first>+</ZoomButton>
        <ZoomButton>−</ZoomButton>
      </ZoomControl>
      <Attribution><a>Leaflet</a> | © <a>OpenStreetMap</a> contributors</Attribution>
    </MapBox>
  );
}

/* ---------- data ---------- */

const ORDERS = [
  ["3003", "Clothes", "LP", "Bangalore", "2:58:41", "2:59:31", 50],
  ["2001", "Food", "MP", "Chennai", "2:58:48", "3:00:40", 112],
  ["1002", "Medicine", "HP", "Hyderabad", "2:58:55", "3:00:00", 65],
  ["1001", "Medicine", "HP", "Delhi", "2:59:26", "3:00:19", 53],
  ["3002", "Clothes", "LP", "Pune", "2:59:34", "3:01:14", 100],
  ["1003", "Medicine", "HP", "Amritsar", "2:59:58", "3:00:57", 59],
  ["2002", "Food", "MP", "Kolkata", "3:00:25", "3:01:42", 77],
  ["3001", "Clothes", "LP", "Mumbai", "3:00:51", "3:01:58", 67],
  ["2003", "Food", "MP", "Agartala", "3:01:00", "3:02:24", 84],
];
const BAR_COLOR = { LP: "#00ff00", MP: "#ffff00", HP: "#ff0000" };

/* ---------- chart ---------- */

const ChartSvg = styled.svg`
  display: block;
  flex: none;
  width: 1902px;
  height: 327px;
  font: 14.4px "Liberation Sans", Arial, sans-serif;
`;

function Chart() {
  const left = 187.4;
  const base = 258.5;
  const unit = 1.636;
  const step = 169.7;
  return (
    <ChartSvg viewBox="0 0 1902 327">
      <text x="187.400" y="36" fontWeight="700" textLength="241.500">Time Taken for items to be Shipped</text>
      {[10, 30, 50, 70, 90, 110].map((v) => <rect key={v} x={left} y={base - v * unit - 0.4} width="1527.500" height="0.800" fill="#ebebeb" />)}
      {[20, 40, 60, 80, 100, 120].map((v) => <rect key={v} x={left} y={base - v * unit - 0.4} width="1527.500" height="0.800" fill="#ccc" />)}
      {ORDERS.map(([id, , pr, , , , v], i) => {
        const x = left + i * step + 32;
        return (
          <g key={id} textAnchor="middle">
            <rect x={x} y={base - v * unit} width="105.700" height={v * unit} fill={BAR_COLOR[pr]} />
            <text x={x + 52.3} y={base - v * unit + 14.3} fill={pr === "MP" ? "#404040" : "#fff"}>{v}</text>
            <text x={x + 52.8} y="280" fill="#222">{id}</text>
          </g>
        );
      })}
      <rect x={left} y={base - 0.5} width="1527.500" height="1" fill="#333" fillOpacity="0.800" />
      {[0, 20, 40, 60, 80, 100, 120].map((v) => <text key={v} x="173" y={base - v * unit + 5} textAnchor="end" fill="#444">{v}</text>)}
      <text x="951" y="306" textAnchor="middle" fontStyle="italic" fill="#222">Order ID</text>
      <text transform="translate(78.800 160) rotate(-90)" textAnchor="middle" fontStyle="italic" fill="#222">Time Taken (s)</text>
    </ChartSvg>
  );
}

/* ---------- table ---------- */

const Table = styled.table`
  display: grid;
  grid-template-columns: 67.2px 63.4px 58.4px 75.4px 101.2px 80.2px 130.4px 131.2px 87px;
  grid-template-rows: 20.8px;
  grid-auto-rows: 19.6px;
  gap: 1.6px;
  align-self: center;
  margin: 6px 0 5.600px;
  padding: 1.8px 1.2px 1.600px;
  border: 1px solid;
  border-color: #b2b2b2 #4d4d4d #4d4d4d #b2b2b2;
  font: 12.8px/16px "DejaVu Serif", serif;
  color: #000;
  thead, tbody, tr { display: contents; }
`;

const Cell = styled.td`
  border: 1px solid;
  border-color: #4d4d4d #b2b2b2 #b2b2b2 #4d4d4d;
  padding: 1px 0.8px 0;
  white-space: nowrap;
`;

const HeadCell = styled(Cell)`
  font-weight: 700;
  text-align: center;
  padding: 2.2px 0 0;
`;

const HEADS = ["Order ID", "Item", "Priority", "City", "Is Dispatched", "Is Shipped", "Order Time", "Shipping Time", "Time Taken"];

function OrdersTable() {
  return (
    <Table>
      <thead><tr>{HEADS.map((h) => <HeadCell as="th" key={h}>{h}</HeadCell>)}</tr></thead>
      <tbody>
        {ORDERS.map(([id, item, pr, city, ordered, shipped, t]) => (
          <tr key={id}>
            {[id, item, pr, city, "YES", "YES", "2021-03-03 " + ordered, "2021-03-03 " + shipped, t].map((v, i) => <Cell key={i}>{v}</Cell>)}
          </tr>
        ))}
      </tbody>
    </Table>
  );
}

export default function App() {
  return (
    <>
      <GlobalStyle />
      <Window>
        <Chrome />
        <Page>
          <Header><Logo /></Header>
          <WorldMap />
          <Chart />
          <Rule $h={3} />
          <OrdersTable />
          <Rule $h={4} />
        </Page>
      </Window>
    </>
  );
}
